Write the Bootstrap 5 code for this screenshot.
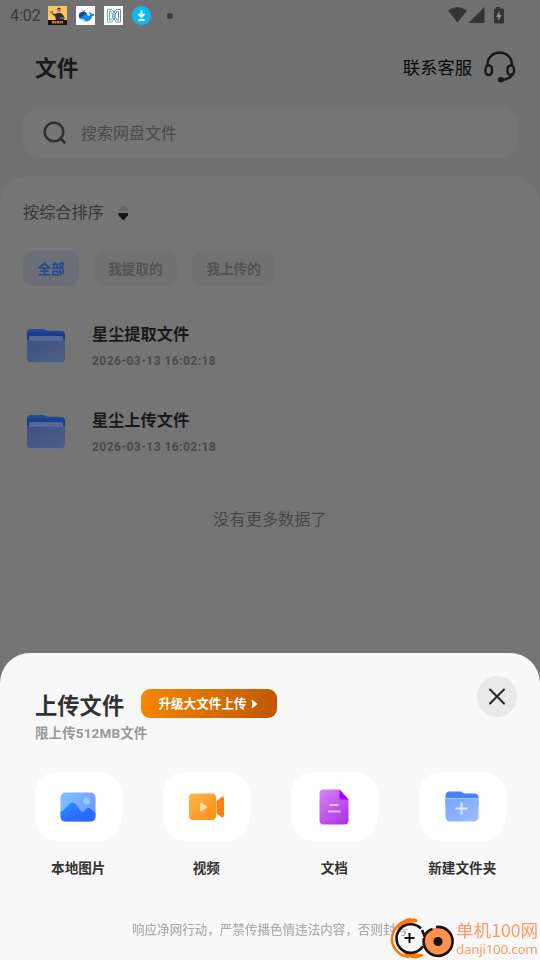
<!DOCTYPE html>
<html lang="zh-CN">
<head>
<meta charset="utf-8">
<meta name="viewport" content="width=device-width, initial-scale=1">
<title>文件</title>
<link href="https://cdn.jsdelivr.net/npm/bootstrap@5.3.0/dist/css/bootstrap.min.css" rel="stylesheet">
<style>
body{font-family:Roboto,"Noto Sans CJK SC",sans-serif;background:#717171;width:540px;height:960px;overflow:hidden;line-height:1}
svg{display:block;flex:none}
.statusbar{height:30px;padding:1px 35px 0 10px;color:#3a3a3a;font-size:16px}
.statusbar .clock{width:38px;letter-spacing:0;padding-top:1px}
.app-icons{gap:9px}
.topbar{height:77px;padding:0 23px 0 35px}
.page-title{font-size:21.7px;color:#191919;font-weight:700}
.support{font-size:17.3px;color:#090909;gap:11px}
.support svg{margin-top:-3px}
.searchbox{margin:0 23px;height:51px;border-radius:17px;background:#757575;padding-left:20px;gap:15px;font-size:16px;color:#4a4a4a}
.searchbox span{padding-top:2px}
.files{margin-top:18px;height:500px;background:#757575;border-radius:28px 28px 0 0;padding:0 23px}
.sorter{height:75px;gap:14px;font-size:16.2px;color:#373737}
.chips{gap:14.6px}
.chip{height:35px;border-radius:11px;width:83.6px;background:#717171;color:#535353;font-size:13.6px;font-weight:700;padding-top:2px}
.chip-on{width:56px;background:#6b6e77;color:#244a94}
.file-row{height:86px;padding-left:3px;gap:26px}
.file-row>svg{margin-top:-2px}
.file-list{padding-top:18px}
.file-name{font-size:16.2px;color:#191919;font-weight:700;margin-bottom:12px}
.file-date{font-size:12px;color:#4a4a4a;font-weight:700;letter-spacing:.45px}
.end-note{margin-top:36px;font-size:16.2px;color:#464646}
.sheet{height:307px;background:#f8f8f8;border-radius:30px 30px 0 0}
.sheet-head{height:119px;padding:23px 23px 0 35px}
.sheet-heading{padding-top:13px}
.sheet-title{font-size:22.3px;color:#333;font-weight:700;width:106px;white-space:nowrap;padding-top:5px}
.upgrade{width:136px;height:29px;border-radius:9px;background:linear-gradient(110deg,#f88800,#bd5700);color:#fff;font-size:12.6px;font-weight:700;gap:4px;padding-right:2px}
.upgrade span{padding-top:2px}
.limit{font-size:13.5px;color:#999;font-weight:700;margin-top:9px;letter-spacing:.12px}
.close-btn{width:40px;height:41px;background:#e9e9e9}
.tiles{padding:0 35px;gap:41.5px}
.tile{width:86.5px;font-size:13.6px;color:#333;font-weight:700;white-space:nowrap}
.tile-box{width:86.5px;height:69px;border-radius:22px;background:#fff;margin-bottom:21px}
.notice{left:132px;top:924px;z-index:1031;font-size:12.55px;color:#aeaeae;font-weight:500;white-space:nowrap}
.brand{left:388px;top:914px;z-index:1032;width:152px;height:46px}
.brand-text{left:68px;top:4px;color:#ff9a66;white-space:nowrap}
.brand-name{font:400 17.6px/24px "Noto Sans CJK SC",sans-serif}
.brand-site{font:400 13.4px/14px "Noto Sans",sans-serif;letter-spacing:-.25px}
</style>
</head>
<body>
<div class="statusbar d-flex align-items-center">
  <span class="clock">4:02</span>
  <div class="app-icons d-flex align-items-center">
    <svg width="19" height="19" viewBox="0 0 19 19"><path fill="#fdc557" d="M0 0h19v19H0z"/><path fill="#141414" d="M0 14h19v5H0z"/><circle cx="11" cy="4" r="2.100" fill="#b97349"/><path d="M9 3q2-3 4 0M3 5l3 3 4-1h3l3 3v4H8L7 10 5 9z" fill="#29303b"/><path d="M2 7l3-2M12 12h5" stroke="#777" stroke-width="1.400"/><path d="M4 16.300h11" stroke="#d78522" stroke-width="2.500" stroke-dasharray="2 .5"/></svg>
    <svg width="19" height="19" viewBox="0 0 19 19"><path fill="#fdfdfd" d="M0 0h19v19H0z"/><path d="M3 8c3-3 7-2 9 1.500 1.500.5 2.500-.5 2.500-1.500L12.500 7l1-1 2 1.500L18.500 8c-.5 1.500-1.500 2-2.500 2.500C15.500 14 12 16 8.500 15.500 4.500 14.500 2 11.500 3 8z" fill="#1487e4"/><path d="M3 8c2-2.500 6-3 8-.5L8 9 4 12q-1.500-2-1-4z" fill="#1c4484"/><path d="M5 3.500l2.500 1.500L9.500 3.500l-1.500 3z" fill="#2187dd"/><path d="M4 12.500q4 0 6 3-4 .5-6-3" fill="#bce5f8"/></svg>
    <svg width="19" height="19" viewBox="0 0 19 19" fill="none" stroke-width="1"><path fill="#fff" d="M0 0h19v19H0z"/><path d="M3.500 3.500H8l3 4v4l-3 4.500H3.500zM5.500 5.500H7l2 3v2.500l-2 3H5.500z" stroke="#73ad9b"/><path d="M16.500 3.500H12l-3 4v4l3 4.500h4.500zM14.500 5.500H13l-2 3v2.500l2 3h1.500z" stroke="#5998ad"/></svg>
    <svg width="19" height="19" viewBox="0 0 19 19"><circle cx="9.500" cy="9.500" r="9.500" fill="#0db8f7"/><path d="M9.500 4v7M6.500 8l3 3 3-3M6.500 14h6" stroke="#fff" stroke-width="1.800" fill="none"/></svg>
  </div>
  <svg class="ms-3" width="6" height="6"><circle cx="3" cy="3" r="3" fill="#3e3e3e"/></svg>
  <svg class="ms-auto" width="58" height="18" viewBox="0 0 58 18" fill="#343434"><path d="M1 3.500q9.500-7 19 0L10.500 15.500z"/><path d="M37.500 0v16H21.500z"/><path d="M49 0h4v1.500h3q1 0 1 1V15.500q0 1-1 1h-8q-1 0-1-1V2.500q0-1 1-1h1z"/><path d="M52.500 4l-3.500 6h2.300v4l3.400-6h-2.200z" fill="#8b8b8b"/></svg>
</div>
<div class="topbar d-flex align-items-center justify-content-between">
  <div class="page-title">文件</div>
  <div class="support d-flex align-items-center">联系客服
    <svg width="34" height="32" viewBox="0 0 34 32" fill="none" stroke="#191919" stroke-width="2.400"><path d="M4.500 15v-2a12.200 11.500 0 0 1 24.400 0v2M30 22q-2 6-11 7"/><rect x="2.500" y="14.500" width="6.500" height="9.500" rx="3.200"/><rect x="24.500" y="14.500" width="6.500" height="9.500" rx="3.200"/><ellipse cx="18" cy="28.800" rx="2" ry="1.500" fill="#191919"/></svg>
  </div>
</div>
<div class="searchbox d-flex align-items-center">
  <svg width="23" height="23" viewBox="0 0 23 23" fill="none" stroke="#303030" stroke-width="2.600" stroke-linecap="round"><circle cx="11" cy="11" r="9.300"/><path d="M17.500 17.500l4 4"/></svg>
  <span>搜索网盘文件</span>
</div>
<main class="files">
  <div class="sorter d-flex align-items-center"><span>按综合排序</span>
    <svg width="11" height="17" viewBox="0 0 11 17"><path d="M5.500 0L10 4.500V6H1V4.500z" fill="#666"/><path d="M.5 8h9.500v2.500L5.500 15.500.5 10.500z" fill="#161616"/></svg>
  </div>
  <div class="chips d-flex">
    <div class="chip chip-on d-flex align-items-center justify-content-center">全部</div>
    <div class="chip d-flex align-items-center justify-content-center">我提取的</div>
    <div class="chip d-flex align-items-center justify-content-center">我上传的</div>
  </div>
  <div class="file-list">
    <div class="file-row d-flex align-items-center">
      <svg width="40" height="36" viewBox="0 0 40 36"><defs><linearGradient id="back" x2="0" y2="1"><stop stop-color="#2c4e93"/><stop offset=".3" stop-color="#173f91"/></linearGradient><linearGradient id="front" x2="1" y2="1"><stop stop-color="#3c5282"/><stop offset="1" stop-color="#505f83"/></linearGradient></defs><path d="M1 5q0-4 4-4h11q3 0 5 1.500l15 .5q3 0 3 4v10H1z" fill="url(#back)"/><path d="M3 13v-3q0-2 2-2h30q2 0 2 2v3" fill="#526792"/><path d="M1 12h38v18q0 5-5 5H6q-5 0-5-5z" fill="url(#front)"/><path d="M3 12h34M4 34.500h32" stroke="#617397"/></svg>
      <div><div class="file-name">星尘提取文件</div><div class="file-date">2026-03-13 16:02:18</div></div>
    </div>
    <div class="file-row d-flex align-items-center">
      <svg width="40" height="36" viewBox="0 0 40 36"><path d="M1 5q0-4 4-4h11q3 0 5 1.500l15 .5q3 0 3 4v10H1z" fill="url(#back)"/><path d="M3 13v-3q0-2 2-2h30q2 0 2 2v3" fill="#526792"/><path d="M1 12h38v18q0 5-5 5H6q-5 0-5-5z" fill="url(#front)"/><path d="M3 12h34M4 34.500h32" stroke="#617397"/></svg>
      <div><div class="file-name">星尘上传文件</div><div class="file-date">2026-03-13 16:02:18</div></div>
    </div>
  </div>
  <div class="end-note text-center">没有更多数据了</div>
</main>
<section class="sheet fixed-bottom">
  <div class="sheet-head d-flex justify-content-between align-items-start">
    <div class="sheet-heading">
      <div class="d-flex align-items-center"><div class="sheet-title">上传文件</div>
        <div class="upgrade d-flex align-items-center justify-content-center"><span>升级大文件上传</span><svg width="7" height="10" viewBox="0 0 7 10"><path d="M1 1l5 4-5 4 1-4z" fill="#fff" stroke="#fff" stroke-linejoin="round"/></svg></div>
      </div>
      <div class="limit">限上传512MB文件</div>
    </div>
    <div class="close-btn rounded-circle d-flex align-items-center justify-content-center"><svg width="18" height="18" viewBox="0 0 18 18"><path d="M2 1.500l14 14M16 1.500l-14 14" stroke="#292929" stroke-width="2.100" stroke-linecap="round"/></svg></div>
  </div>
  <div class="tiles d-flex">
    <div class="tile d-flex flex-column align-items-center">
      <div class="tile-box d-flex align-items-center justify-content-center"><svg width="36" height="30" viewBox="0 0 36 30"><defs><linearGradient id="sky" x2="1" y2=".4"><stop stop-color="#7fc3ff"/><stop offset="1" stop-color="#729dff"/></linearGradient><linearGradient id="hill" x2=".6" y2=".6"><stop stop-color="#2c92ff"/><stop offset="1" stop-color="#286bff"/></linearGradient></defs><rect x=".5" y=".5" width="35" height="29" rx="5" fill="url(#sky)"/><path d="M.5 20C6 18 9 9 14 11c4 2 6 9 9 9 2-1 3-4 6-4 3 1 4 3 6.500 5v3q0 5.500-5 5.500h-25q-5 0-5-5.500z" fill="url(#hill)"/><circle cx="26.500" cy="9" r="3.600" fill="#9bc9ff"/></svg></div><span>本地图片</span>
    </div>
    <div class="tile d-flex flex-column align-items-center">
      <div class="tile-box d-flex align-items-center justify-content-center"><svg width="36" height="28" viewBox="0 0 36 28"><defs><linearGradient id="cam" x2="1" y2="1"><stop stop-color="#ffb84a"/><stop offset="1" stop-color="#ff8b12"/></linearGradient></defs><rect x="1" y=".5" width="27" height="26.500" rx="4" fill="url(#cam)"/><path d="M28.500 8l5-4q2.500-1.500 2.500 1v17q0 3-3 2l-4.500-4z" fill="#ff8012"/><path d="M13 10.500v7l5-3.500z" fill="#ffe0af" stroke="#ffe0af" stroke-width="2" stroke-linejoin="round"/></svg></div><span>视频</span>
    </div>
    <div class="tile d-flex flex-column align-items-center">
      <div class="tile-box d-flex align-items-center justify-content-center"><svg width="30" height="36" viewBox="0 0 30 36"><defs><linearGradient id="doc" x2=".8" y2="1"><stop stop-color="#d884fa"/><stop offset="1" stop-color="#ad35e1"/></linearGradient></defs><path d="M4 .500h16.500l9 10V31q0 4.500-4 4.500H4.500q-4 0-4-4.500V4.500q0-4 3.500-4z" fill="url(#doc)"/><path d="M20.500.500l9 10h-9z" fill="#a300ff"/><path d="M10.500 16h9M9 22.500h12.500" stroke="#e8baf9" stroke-width="2"/></svg></div><span>文档</span>
    </div>
    <div class="tile d-flex flex-column align-items-center">
      <div class="tile-box d-flex align-items-center justify-content-center"><svg width="34" height="31" viewBox="0 0 34 31"><defs><linearGradient id="fold" x2="1" y2="1"><stop stop-color="#78a4ff"/><stop offset="1" stop-color="#9cbcff"/></linearGradient></defs><path d="M.5 5q0-4.500 4-4.500h11l4 2h10q4 0 4 4v8H.5z" fill="#4682ff"/><path d="M.5 7.500h33v18q0 5-5 5H5.500q-5 0-5-5z" fill="url(#fold)"/><path d="M.5 7.500h33" stroke="#a6c4ff"/><path d="M10.500 17.500h12M16.500 11.500v12" stroke="#e1ecff" stroke-width="2"/></svg></div><span>新建文件夹</span>
    </div>
  </div>
</section>
<div class="notice position-fixed">响应净网行动，严禁传播色情违法内容，否则封号</div>
<div class="brand position-fixed">
  <svg width="68" height="46" viewBox="0 0 68 46" fill="none">
    <path d="M23 5C12 7 4 15 4 25c0 10 8 17 17 18" stroke="#f70" stroke-width="2.500"/><path d="M10 13Q16 4 26 4.500q5 .5 3 3.500l-7 1-12 6zM14 38l20 2q3 1 0 2.500Q24 48 14 38z" fill="#f70"/>
    <path d="M33 14.500A14.300 14.300 0 1 0 35 32" stroke="#191314" stroke-width="2.600"/><path d="M21.500 19v10M16.500 24h10" stroke="#191314" stroke-width="2"/>
    <circle cx="50" cy="27.500" r="14" fill="#ff914f"/><path d="M34 16l2.500 6q2-5 8-7M48 13a14.500 14.500 0 1 1-12 11" stroke="#191314" stroke-width="2.600"/><circle cx="50" cy="27.500" r="4.600" fill="#191314"/>
  </svg>
  <div class="brand-text position-absolute"><div class="brand-name">单机100网</div><div class="brand-site">danji100.com</div></div>
</div>
<script src="https://cdn.jsdelivr.net/npm/bootstrap@5.3.0/dist/js/bootstrap.bundle.min.js"></script>
</body>
</html>
